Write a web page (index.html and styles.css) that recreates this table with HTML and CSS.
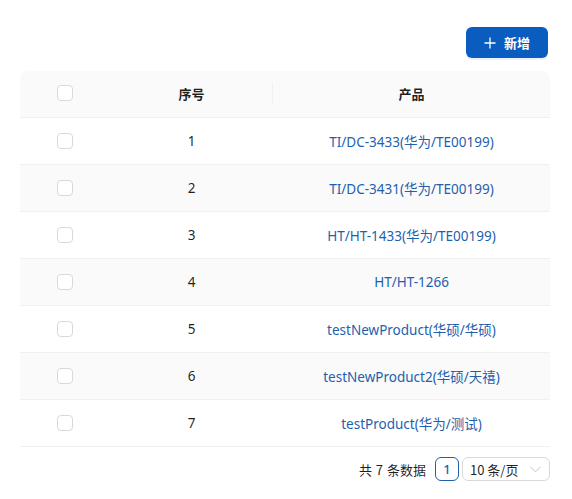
FILE: index.html
```html
<!DOCTYPE html>
<html lang="zh">
<head>
<meta charset="utf-8">
<link rel="stylesheet" href="styles.css">
</head>
<body>
<div class="page">
  <div class="toolbar">
    <button class="btn-primary">
      <svg class="plus" width="12" height="12" viewBox="0 0 12 12"><path d="M6 0.5V11.5M0.5 6H11.5" stroke="#fff" stroke-width="1.3" fill="none"/></svg>
      <span>新增</span>
    </button>
  </div>
  <table class="grid">
    <thead>
      <tr>
        <th class="c-check"><span class="cb"></span></th>
        <th class="c-no"><span class="sep">序号</span></th>
        <th class="c-prod">产品</th>
      </tr>
    </thead>
    <tbody>
      <tr><td class="c-check"><span class="cb"></span></td><td class="c-no">1</td><td class="c-prod"><a>TI/DC-3433(华为/TE00199)</a></td></tr>
      <tr class="alt"><td class="c-check"><span class="cb"></span></td><td class="c-no">2</td><td class="c-prod"><a>TI/DC-3431(华为/TE00199)</a></td></tr>
      <tr><td class="c-check"><span class="cb"></span></td><td class="c-no">3</td><td class="c-prod"><a>HT/HT-1433(华为/TE00199)</a></td></tr>
      <tr class="alt"><td class="c-check"><span class="cb"></span></td><td class="c-no">4</td><td class="c-prod"><a>HT/HT-1266</a></td></tr>
      <tr><td class="c-check"><span class="cb"></span></td><td class="c-no">5</td><td class="c-prod"><a>testNewProduct(华硕/华硕)</a></td></tr>
      <tr class="alt"><td class="c-check"><span class="cb"></span></td><td class="c-no">6</td><td class="c-prod"><a>testNewProduct2(华硕/天禧)</a></td></tr>
      <tr><td class="c-check"><span class="cb"></span></td><td class="c-no">7</td><td class="c-prod"><a>testProduct(华为/测试)</a></td></tr>
    </tbody>
  </table>
  <div class="pager">
    <span class="total">共&nbsp;7&nbsp;条数据</span>
    <span class="page-item">1</span>
    <span class="size-select">10 条/页
      <svg class="arrow" width="11" height="7" viewBox="0 0 11 7"><path d="M0.5 0.8L5.5 5.8L10.5 0.8" stroke="#c4c4c4" stroke-width="1" fill="none"/></svg>
    </span>
  </div>
</div>
</body>
</html>
```
FILE: styles.css
```css
* { box-sizing: border-box; }
html, body { margin: 0; padding: 0; background: #fff; }
body {
  font-family: "Noto Sans", "Noto Sans CJK SC", sans-serif;
  font-size: 13.5px;
  color: rgba(0,0,0,0.88);
}
.page {
  padding: 27px 22px 0 20px;
}
.toolbar {
  display: flex;
  justify-content: flex-end;
  padding-right: 2px;
  margin-bottom: 13px;
}
.btn-primary {
  display: flex;
  align-items: center;
  gap: 8px;
  height: 31px;
  width: 82px;
  justify-content: center;
  background: #0b5cbf;
  color: #fff;
  border: none;
  border-radius: 6px;
  font-family: "Noto Sans CJK SC", sans-serif;
  font-size: 13px;
  font-weight: 700;
  padding: 0 14px;
  box-shadow: 0 2px 0 rgba(5, 95, 255, 0.08);
}
.plus { display: block; }
.grid {
  width: 530px;
  border-collapse: separate;
  border-spacing: 0;
  table-layout: fixed;
}
.grid th, .grid td {
  height: 47px;
  padding: 0;
  text-align: center;
  border-bottom: 1px solid #f0f0f0;
  vertical-align: middle;
}
.grid thead th {
  background: #fafafa;
  font-family: "Noto Sans CJK SC", sans-serif;
  font-weight: 700;
  font-size: 13px;
  color: rgba(0,0,0,0.88);
  padding-bottom: 2px;
}
.grid thead th:first-child { border-top-left-radius: 8px; }
.grid thead th:last-child { border-top-right-radius: 8px; }
.c-check { width: 90px; }
.c-no { width: 163px; }
.grid thead .c-no { position: relative; }
.grid thead .c-no::after {
  content: "";
  position: absolute;
  right: 0;
  top: 12px;
  height: 22px;
  width: 1px;
  background: #f0f0f0;
}
.grid tbody tr.alt td { background: #fafafa; }
.cb {
  display: block;
  margin: 0 auto;
  width: 16px;
  height: 16px;
  border: 1px solid #d9d9d9;
  border-radius: 4px;
  background: #fff;
}
.grid td a {
  color: #1f5fae;
  text-decoration: none;
}
.pager {
  display: flex;
  justify-content: flex-end;
  align-items: center;
  margin-top: 10px;
  font-size: 13px;
}
.total {
  font-family: "Noto Sans CJK SC", sans-serif;
  margin-right: 9px;
  word-spacing: 1px;
}
.page-item {
  width: 24px;
  height: 24px;
  border: 1px solid #1f5fae;
  border-radius: 6px;
  color: #1f5fae;
  display: flex;
  align-items: center;
  justify-content: center;
  font-weight: 500;
  margin-right: 3px;
}
.size-select {
  width: 88px;
  height: 24px;
  border: 1px solid #d9d9d9;
  border-radius: 6px;
  display: flex;
  align-items: center;
  padding: 0 8px 0 7px;
  justify-content: space-between;
  font-family: "Noto Sans CJK SC", sans-serif;
}
```
